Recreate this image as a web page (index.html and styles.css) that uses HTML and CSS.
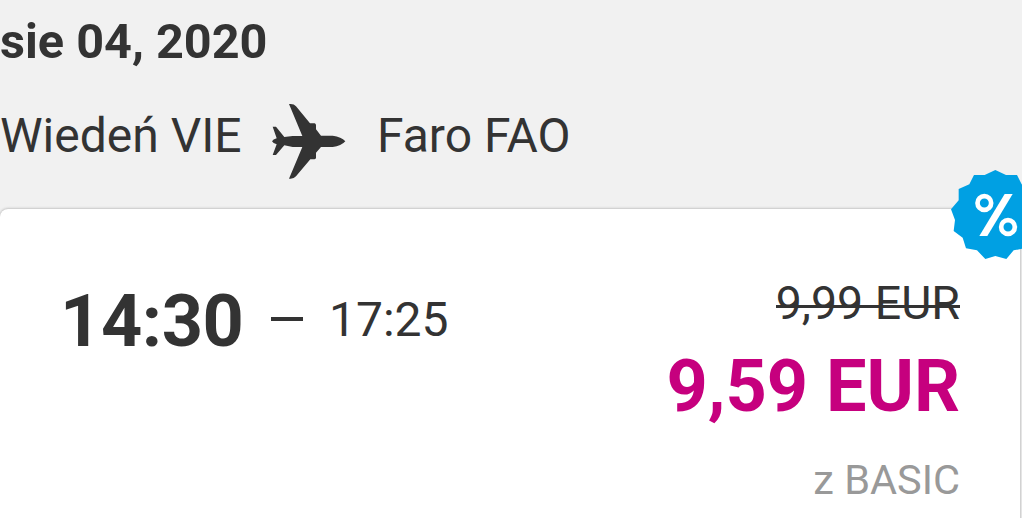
FILE: index.html
```html
<!DOCTYPE html>
<html lang="pl">
<head>
<meta charset="utf-8">
<title>Wiedeń – Faro</title>
<link rel="stylesheet" href="styles.css">
</head>
<body>
<header class="trip">
  <div class="date">sie 04, 2020</div>
  <div class="route">
    <span class="from">Wiedeń VIE</span>
    <svg class="plane" viewBox="30 24 222 228" width="74" height="76"><path d="M81 27Q95 25 102 34L144 85H158Q162 86 162 91V103L177 122H212Q238 125 250 139Q238 153 212 156H177L162 173V188Q161 193 157 193H145L102 244Q95 253 81 251L121 156H92L67 151L42 180H32L44 148Q33 145 30 139Q33 133 44 130L32 95H42L67 126L92 123H121Z"/></svg>
    <span class="to">Faro FAO</span>
  </div>
</header>
<main class="card">
  <svg class="badge" viewBox="57 30 270 270" width="90" height="90">
    <path class="seal" d="M190 30L222 45H255L269 73L300 87V121L323 148L311 180L315 213L288 233L278 265L245 271L223 297L190 288L160 297L135 271L102 265L92 233L65 213L69 180L57 148L80 121V87L112 73L126 45H158Z"/>
    <g class="ring"><circle cx="157" cy="129" r="20.5"/><circle cx="228" cy="201" r="20.5"/></g>
    <path class="slash" d="M218 102H242L166 228H142Z"/>
  </svg>
  <div class="times"><strong class="depart">14:30</strong><span class="dash"></span><span class="arrive">17:25</span></div>
  <div class="prices">
    <div class="old"><s>9,99 EUR</s></div>
    <div class="new">9,59 EUR</div>
    <div class="plan">z BASIC</div>
  </div>
</main>
</body>
</html>
```
FILE: styles.css
```css
* { box-sizing: border-box; }
body { margin: 0; width: 1022px; height: 518px; overflow: hidden; display: flex; flex-direction: column; background: #f1f1f1; color: #333; font-family: Roboto, sans-serif; }
.trip { height: 209px; flex: none; }
.date { padding-top: 13px; height: 103px; font-size: 48.6px; line-height: 57px; font-weight: 700; }
.route { display: flex; font-size: 48px; line-height: 66px; white-space: nowrap; }
.from { width: 272px; }
.to { margin-left: 31px; }
.plane { fill: #333; flex: none; }
.card { position: relative; flex: none; width: 1020px; height: 320px; display: flex; justify-content: space-between; background: #fff; border-radius: 8px 8px 0 0; box-shadow: 0 0 3px #999; padding: 0 60px; }
.badge { position: absolute; left: 951px; top: -39px; }
.seal { fill: #00a0e3; }
.ring { fill: none; stroke: #fff; stroke-width: 14; }
.slash { fill: #fff; }
.times { display: flex; padding-top: 68px; line-height: 86px; }
.depart { font-size: 72px; line-height: 90px; width: 211px; letter-spacing: -0.4px; }
.dash { width: 32px; height: 4px; background: #333; margin: 40px 26px 0 0; }
.arrive { font-size: 48px; }
.prices { text-align: right; padding-top: 64px; white-space: nowrap; }
.old { font-size: 46.5px; line-height: 60px; }
.old s { position: relative; text-decoration: none; }
.old s::after { content: ""; position: absolute; left: 0; right: 0; top: 29px; height: 3px; background: #333; }
.new { font-size: 72px; line-height: 108px; font-weight: 700; color: #c6007e; }
.plan { font-size: 41.5px; line-height: 78px; color: #999; }
```
